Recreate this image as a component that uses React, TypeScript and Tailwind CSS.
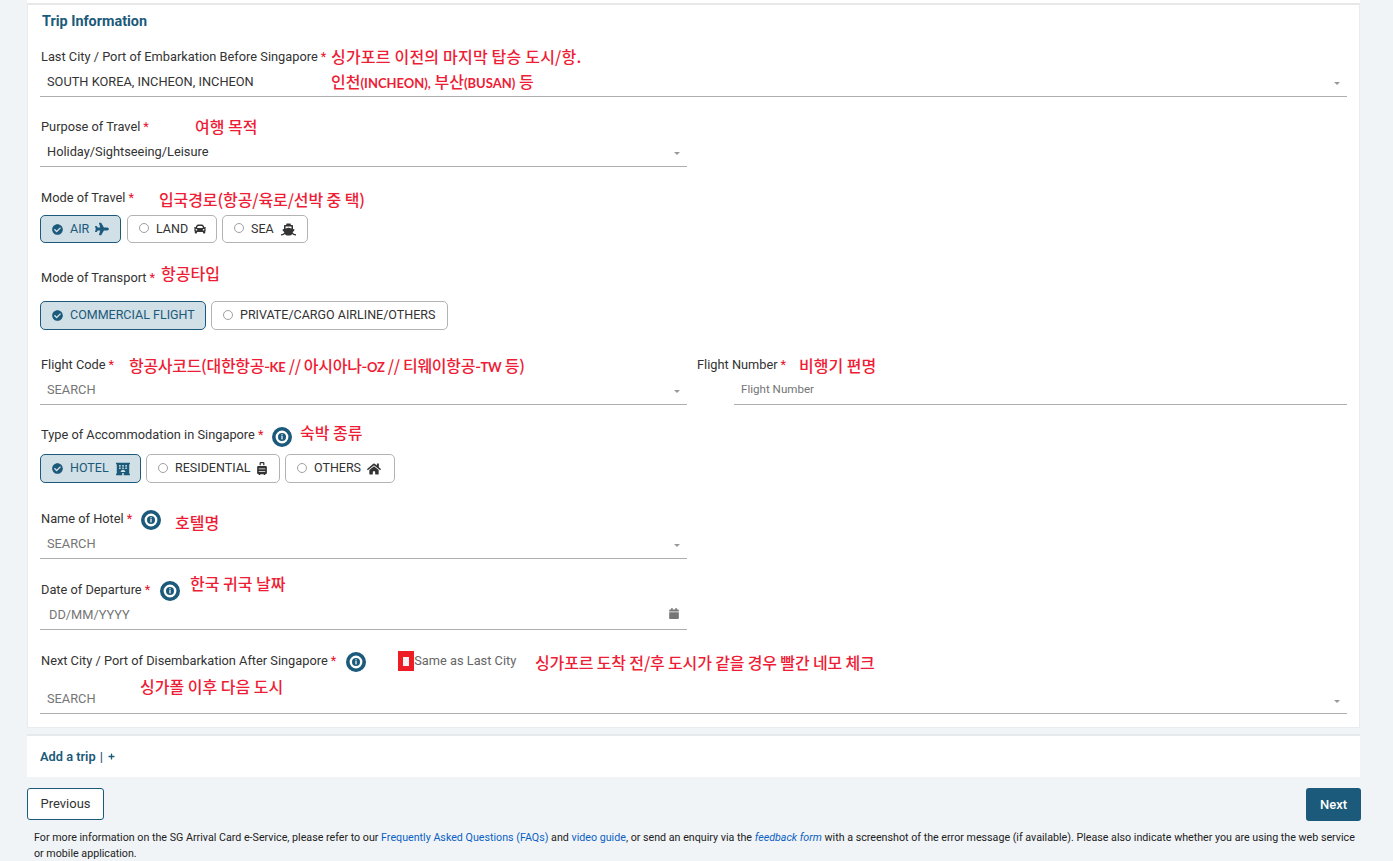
import React from 'react';
import {
  FaCheckCircle,
  FaPlane,
  FaCar,
  FaShip,
  FaHotel,
  FaSuitcaseRolling,
  FaHome,
  FaCalendar,
  FaPlus,
} from 'react-icons/fa';

const Req = () => <span className="text-[#e8112d] ml-[3px]">*</span>;

const InfoIcon = ({ className }: { className?: string }) => (
  <svg viewBox="0 0 20 20" className={`w-5 h-5 shrink-0 ${className ?? ''}`}>
    <circle cx="10" cy="10" r="8.2" fill="#fff" stroke="#1b5a7a" strokeWidth="3.6" />
    <circle cx="10" cy="10" r="4" fill="#1b5a7a" />
    <rect x="9.4" y="9" width="1.2" height="3.4" fill="#fff" />
    <rect x="9.4" y="7.2" width="1.2" height="1.2" fill="#fff" />
  </svg>
);

// red hand-written notes lying over the form
const Note = ({ className, children }: { className: string; children: React.ReactNode }) => (
  <span className={`absolute whitespace-nowrap text-[16px] leading-5 font-medium text-[#ee1c35] font-['Noto_Sans_CJK_KR',sans-serif] ${className}`}>
    {children}
  </span>
);

// latin letters in the notes are smaller and narrower than the hangul
const En = ({ children }: { children: React.ReactNode }) => (
  <span className="text-[13px] font-bold font-['Lato',sans-serif]">{children}</span>
);

const Label = ({ children }: { children: React.ReactNode }) => (
  <div className="relative h-5 pl-[1px] flex items-center text-[12.8px] text-[#333]">{children}</div>
);

const Caret = () => (
  <span className="w-0 h-0 border-x-[3px] border-x-transparent border-t-[3px] border-t-[#999] mt-1" />
);

const SelectBox = ({
  value,
  placeholder,
  className,
}: {
  value: string;
  placeholder?: boolean;
  className?: string;
}) => (
  <div
    className={`h-[30px] border-b border-[#aeaeae] flex items-center justify-between pl-[7px] pr-[7px] text-[12.8px] ${
      placeholder ? 'text-[#757575]' : 'text-[#333]'
    } ${className ?? ''}`}
  >
    <span>{value}</span>
    <Caret />
  </div>
);

const Choice = ({
  label,
  icon,
  selected,
  className,
}: {
  label: string;
  icon?: React.ReactNode;
  selected?: boolean;
  className: string;
}) => (
  <div
    className={`flex items-center rounded-[5px] border text-[12.5px] pl-[11px] ${className} ${
      selected ? 'bg-[#d1dfe6] border-[#1b5a7a] text-[#1b5a7a]' : 'bg-white border-[#b3b3b3] text-[#333]'
    }`}
  >
    {selected ? (
      <FaCheckCircle className="w-[11px] h-[11px] text-[#1b5a7a] mr-[7px]" />
    ) : (
      <span className="w-[10px] h-[10px] rounded-full border border-[#a0a0a0] mr-[7px] -mt-[2px]" />
    )}
    <span>{label}</span>
    {icon}
  </div>
);

export default function App() {
  return (
    <div className="h-[861px] overflow-hidden bg-[#f0f4f7] font-['Roboto',sans-serif]">
      <div className="mx-[27px] w-[1333px]">
        <div className="h-[5px] bg-white border-b-[2px] border-[#e6e8ea]" />

        <div className="h-[723px] bg-white px-[12px] border-x border-b border-[#e9ecef]">
          <div className="h-[33px] mb-[9px] pl-[2px] flex items-center text-[14.4px] font-bold text-[#1b5a7a]">
            Trip Information
          </div>

          {/* Last city */}
          <Label>
            Last City / Port of Embarkation Before Singapore
            <Req />
            <Note className="left-[291px] -top-[1px] tracking-[0.2px]">싱가포르 이전의 마지막 탑승 도시/항.</Note>
          </Label>
          <div className="relative">
            <SelectBox value="SOUTH KOREA, INCHEON, INCHEON" />
            <Note className="left-[291px] top-[4px]">
              인천<En>(INCHEON),</En> 부산<En>(BUSAN)</En> 등
            </Note>
          </div>

          {/* Purpose */}
          <div className="mt-[20px]">
            <Label>
              Purpose of Travel
              <Req />
              <Note className="left-[155px] -top-[1px]">여행 목적</Note>
            </Label>
            <SelectBox value="Holiday/Sightseeing/Leisure" className="w-[647px]" />
          </div>

          {/* Mode of travel */}
          <div className="mt-[21px]">
            <Label>
              Mode of Travel
              <Req />
              <Note className="left-[119px] top-[1px] tracking-[-0.1px]">입국경로(항공/육로/선박 중 택)</Note>
            </Label>
            <div className="mt-[7px] flex gap-[6px]">
              <Choice
                selected
                label="AIR"
                className="w-[81px] h-[28px]"
                icon={<FaPlane className="w-[14px] h-[14px] ml-[6px]" />}
              />
              <Choice
                label="LAND"
                className="w-[90px] h-[28px]"
                icon={<FaCar className="w-[12px] h-[12px] ml-[6px] text-[#333]" />}
              />
              <Choice
                label="SEA"
                className="w-[86px] h-[28px] -ml-[1px]"
                icon={<FaShip className="w-[15px] h-[15px] ml-[7px] text-[#333]" />}
              />
            </div>
          </div>

          {/* Mode of transport */}
          <div className="mt-[25px]">
            <Label>
              Mode of Transport
              <Req />
              <Note className="left-[121px] -top-[5px]">항공타입</Note>
            </Label>
            <div className="mt-[13px] flex gap-[5px]">
              <Choice selected label="COMMERCIAL FLIGHT" className="w-[166px] h-[29px]" />
              <Choice label="PRIVATE/CARGO AIRLINE/OTHERS" className="w-[237px] h-[29px]" />
            </div>
          </div>

          {/* Flight code / number */}
          <div className="mt-[25px] flex">
            <div className="relative w-[647px]">
              <Label>
                Flight Code
                <Req />
              </Label>
              <Note className="left-[89px] top-0 tracking-[-0.3px]">
                항공사코드(대한항공-<En>KE</En> // 아시아나-<En>OZ</En> // 티웨이항공-<En>TW</En> 등)
              </Note>
              <SelectBox placeholder value="SEARCH" />
            </div>
            <div className="relative flex-1 ml-[9px]">
              <Label>
                Flight Number
                <Req />
                <Note className="left-[103px] top-0">비행기 편명</Note>
              </Label>
              <div className="ml-[38px] h-[30px] pt-[1px] border-b border-[#aeaeae] flex items-center pl-[7px] text-[11.6px] text-[#757575]">
                Flight Number
              </div>
            </div>
          </div>

          {/* Accommodation */}
          <div className="mt-[20px]">
            <Label>
              Type of Accommodation in Singapore
              <Req />
              <InfoIcon className="ml-[9px] mt-[3px]" />
              <Note className="left-[260px] -top-[3px]">숙박 종류</Note>
            </Label>
            <div className="mt-[9px] flex gap-[5px]">
              <Choice
                selected
                label="HOTEL"
                className="w-[101px] h-[29px]"
                icon={<FaHotel className="w-[14px] h-[14px] ml-[7px]" />}
              />
              <Choice
                label="RESIDENTIAL"
                className="w-[134px] h-[29px]"
                icon={<FaSuitcaseRolling className="w-[12px] h-[13px] ml-[5px] text-[#333]" />}
              />
              <Choice
                label="OTHERS"
                className="w-[110px] h-[29px]"
                icon={<FaHome className="w-[14px] h-[14px] ml-[6px] text-[#333]" />}
              />
            </div>
          </div>

          {/* Hotel name */}
          <div className="mt-[26px]">
            <Label>
              Name of Hotel
              <Req />
              <InfoIcon className="ml-[9px] mt-[1px]" />
              <Note className="left-[135px] top-[3px]">호텔명</Note>
            </Label>
            <SelectBox placeholder value="SEARCH" className="w-[647px]" />
          </div>

          {/* Departure date */}
          <div className="mt-[21px]">
            <Label>
              Date of Departure
              <Req />
              <InfoIcon className="ml-[10px] mt-[1px]" />
              <Note className="left-[150px] -top-[7px]">한국 귀국 날짜</Note>
            </Label>
            <div className="w-[647px] h-[30px] pt-[1px] border-b border-[#aeaeae] flex items-center justify-between pl-[9px] pr-[8px] text-[12.8px] text-[#757575]">
              <span>DD/MM/YYYY</span>
              <FaCalendar className="w-[10px] h-[11px] text-[#757575] -mt-[3px]" />
            </div>
          </div>

          {/* Next city */}
          <div className="mt-[21px]">
            <Label>
              Next City / Port of Disembarkation After Singapore
              <Req />
              <InfoIcon className="ml-[10px] mt-[1px]" />
              <span className="ml-[32px] w-4 h-5 bg-[#ee1c25] flex items-center justify-center">
                <span className="w-[6px] h-[9px] bg-[#f3f3f3]" />
              </span>
              <span className="text-[#666]">Same as Last City</span>
              <Note className="left-[495px] top-[1px] tracking-[-0.15px]">
                싱가포르 도착 전/후 도시가 같을 경우 빨간 네모 체크
              </Note>
            </Label>
            <div className="relative h-[43px] pt-[13px] border-b border-[#aeaeae]">
              <div className="h-[30px] flex items-center justify-between pl-[7px] pr-[7px] text-[12.8px] text-[#757575]">
                <span>SEARCH</span>
                <Caret />
              </div>
              <Note className="left-[100px] top-[5px]">싱가폴 이후 다음 도시</Note>
            </div>
          </div>
        </div>

        {/* Add a trip */}
        <div className="mt-[6px] h-[43px] bg-white pl-[13px] flex items-center border-t-2 border-[#e6e9ec] text-[12.8px] font-semibold text-[#1b5a7a]">
          <span>Add a trip</span>
          <span className="ml-[4px]">|</span>
          <FaPlus className="w-[7px] h-[7px] ml-[5px]" />
        </div>

        {/* Navigation */}
        <div className="mt-[11px] flex items-start justify-between">
          <button className="w-[77px] h-[32px] bg-white border border-[#1b5a7a] rounded-[3px] text-[13px] text-[#333]">
            Previous
          </button>
          <button className="w-[55px] h-[33px] -mr-[1px] bg-[#1b5a7a] rounded-[3px] text-[13px] font-medium text-white">
            Next
          </button>
        </div>

        <div className="mt-[9px] ml-[7px] w-[1325px] text-[10.7px] leading-4 text-[#222]">
          <p>
            For more information on the SG Arrival Card e-Service, please refer to our{' '}
            <span className="text-[#0b5fc4]">Frequently Asked Questions (FAQs)</span> and{' '}
            <span className="text-[#0b5fc4]">video guide</span>, or send an enquiry via the{' '}
            <span className="italic text-[#0b5fc4]">feedback form</span> with a screenshot of the error message (if
            available). Please also indicate whether you are using the web service
          </p>
          <p>or mobile application.</p>
        </div>
      </div>
    </div>
  );
}
